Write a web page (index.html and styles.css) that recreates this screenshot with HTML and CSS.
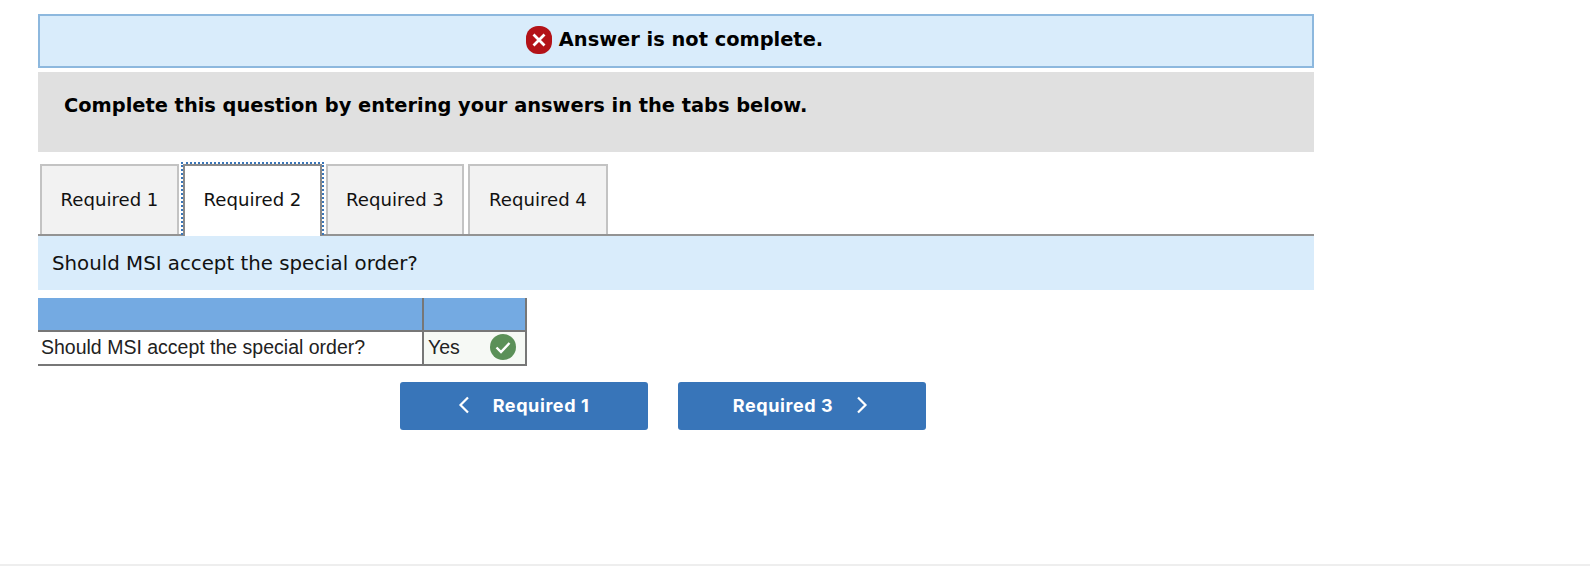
FILE: index.html
```html
<!DOCTYPE html>
<html lang="en">
  <head>
    <meta charset="UTF-8" />
    <title>Answer is not complete</title>
    <link rel="stylesheet" href="styles.css">
  </head>
  <body>
    <div class="container">
      <div class="alert">
        <svg class="alert-icon" width="26" height="28" viewBox="0 0 26 28">
          <rect width="26" height="28" rx="12" fill="#b31217" />
          <path d="M7.500 8.500l11 11M18.500 8.500l-11 11" stroke="#fff" stroke-width="2.800" fill="none" />
        </svg>
        <span>Answer is not complete.</span>
      </div>

      <div class="instructions">Complete this question by entering your answers in the tabs below.</div>

      <div class="tabs">
        <div class="tab">Required 1</div>
        <div class="tab active">Required 2</div>
        <div class="tab narrow">Required 3</div>
        <div class="tab wide">Required 4</div>
      </div>

      <div class="question">Should MSI accept the special order?</div>

      <table class="answer-table">
        <tr class="head-row">
          <th class="col-label"></th>
          <th class="col-answer"></th>
        </tr>
        <tr>
          <td class="col-label">Should MSI accept the special order?</td>
          <td class="col-answer answer-cell">
            <div class="answer-inner">
              <span>Yes</span>
              <svg width="26" height="26" viewBox="0 0 26 26">
                <circle cx="13" cy="13" r="13" fill="#5b9058" />
                <path d="M6.500 13.500l4.500 4.500L19.500 9" stroke="#fff" stroke-width="2.400" fill="none" />
              </svg>
            </div>
          </td>
        </tr>
      </table>

      <div class="nav-buttons">
        <button class="nav-btn" type="button">
          <svg width="12" height="18" viewBox="0 0 12 18">
            <path d="M11 1.500L3.500 9l7.500 7.500" stroke="#fff" stroke-width="2.200" fill="none" />
          </svg>
          <span>Required 1</span>
        </button>
        <button class="nav-btn" type="button">
          <span>Required 3</span>
          <svg width="12" height="18" viewBox="0 0 12 18">
            <path d="M1 1.500L8.500 9 1 16.500" stroke="#fff" stroke-width="2.200" fill="none" />
          </svg>
        </button>
      </div>
    </div>
    <div class="page-end"></div>
  </body>
</html>
```

FILE: styles.css
```css
* {
  margin: 0;
  padding: 0;
  box-sizing: border-box;
}

html,
body {
  height: 100%;
}

body {
  background-color: #fff;
  color: #000;
  font-family: "DejaVu Sans", Verdana, sans-serif;
  display: flex;
  flex-direction: column;
  justify-content: space-between;
  overflow: hidden;
}

.container {
  width: 1276px;
  margin: 14px 0 0 38px;
}

.alert {
  height: 54px;
  background-color: #d9ecfb;
  border: 2px solid #8db8de;
  display: flex;
  align-items: center;
  justify-content: center;
  gap: 7px;
  font-size: 19.4px;
  font-weight: bold;
  padding: 0 3px 3px 0;
}

.alert-icon {
  flex-shrink: 0;
}

.instructions {
  height: 80px;
  margin-top: 4px;
  padding: 23px 26px;
  background-color: #e0e0e0;
  font-size: 19.4px;
  font-weight: bold;
  line-height: 22px;
}

.tabs {
  display: flex;
  gap: 4px;
  margin-top: 12px;
  padding-left: 2px;
  border-bottom: 2px solid #939393;
  height: 72px;
}

.tab {
  width: 139px;
  height: 70px;
  padding-bottom: 2px;
  background-color: #f2f2f2;
  border: 2px solid #c3c3c3;
  border-bottom: none;
  font-size: 18.1px;
  display: flex;
  align-items: center;
  justify-content: center;
  color: #111;
}

.tab.narrow {
  width: 138px;
}

.tab.wide {
  width: 140px;
}

.tab.active {
  height: 72px;
  padding-bottom: 4px;
  background-color: #fff;
  border-color: #8a8a8a;
  outline: 2px dotted #3b76b8;
}

/* sits on top of the active tab's outline so only three sides show */
.question {
  position: relative;
  height: 54px;
  padding: 1px 0 0 14px;
  background-color: #d9ecfb;
  font-size: 19.8px;
  line-height: 54px;
  color: #111;
}

.answer-table {
  margin-top: 8px;
  border-collapse: collapse;
  font-family: "Liberation Sans", Arial, sans-serif;
  font-size: 19.5px;
  color: #222;
}

.answer-table th,
.answer-table td {
  padding: 0;
}

.head-row th {
  height: 33px;
  background-color: #74aae2;
}

.answer-table .col-label {
  width: 385px;
  padding: 0 0 2px 3px;
  text-align: left;
  border-bottom: 2px solid #777;
  height: 34px;
}

.answer-table .col-answer {
  width: 103px;
  border-left: 2px solid #777;
  border-right: 2px solid #777;
  border-bottom: 2px solid #777;
}

.head-row .col-label {
  height: 33px;
}

.answer-cell {
  background-color: #f6f9f5;
}

.answer-inner {
  display: flex;
  align-items: center;
  justify-content: space-between;
  padding: 0 9px 2px 4px;
}

.nav-buttons {
  display: flex;
  gap: 30px;
  margin: 16px 0 0 362px;
}

.nav-btn {
  width: 248px;
  height: 48px;
  padding: 0 2px 2px 0;
  background-color: #3875b9;
  color: #fff;
  border: none;
  border-radius: 3px;
  font-family: Inter, "Open Sans", sans-serif;
  font-size: 18px;
  font-weight: 700;
  letter-spacing: 0.6px;
  display: flex;
  align-items: center;
  justify-content: center;
  gap: 24px;
  cursor: pointer;
}

.page-end {
  height: 2px;
  background-color: #eeeeee;
}
```
